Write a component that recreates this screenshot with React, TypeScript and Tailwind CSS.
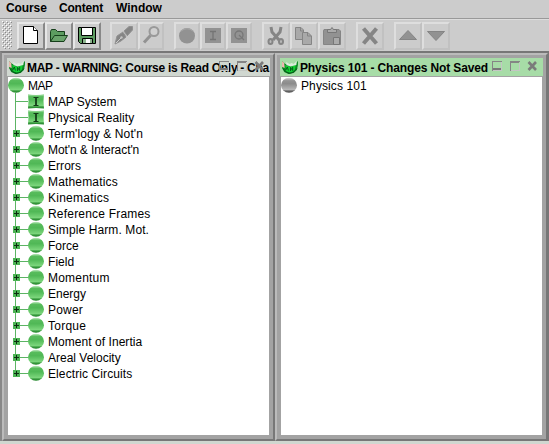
import type { ReactNode } from "react";

const sections = [
  { label: "Term'logy & Not'n", tracking: "tracking-[0.1px]" },
  { label: "Mot'n & Interact'n", tracking: "tracking-[-0.08px]" },
  { label: "Errors", tracking: "tracking-[0.05px]" },
  { label: "Mathematics", tracking: "tracking-[0.17px]" },
  { label: "Kinematics", tracking: "tracking-[0.25px]" },
  { label: "Reference Frames", tracking: "tracking-[0.2px]" },
  { label: "Simple Harm. Mot.", tracking: "tracking-[0.1px]" },
  { label: "Force", tracking: "tracking-normal" },
  { label: "Field", tracking: "tracking-[0.05px]" },
  { label: "Momentum", tracking: "tracking-[0.2px]" },
  { label: "Energy", tracking: "tracking-normal" },
  { label: "Power", tracking: "tracking-[0.2px]" },
  { label: "Torque", tracking: "tracking-[0.25px]" },
  { label: "Moment of Inertia", tracking: "tracking-[0.05px]" },
  { label: "Areal Velocity", tracking: "tracking-normal" },
  { label: "Electric Circuits", tracking: "tracking-[0.1px]" },
];

function Defs() {
  return (
    <svg className="absolute h-0 w-0">
      <defs>
        <linearGradient id="green" x1="0" y1="0" x2="0" y2="1">
          <stop offset="0" stopColor="#c4ecc4" />
          <stop offset=".18" stopColor="#58bc5c" />
          <stop offset=".4" stopColor="#50b856" />
          <stop offset=".8" stopColor="#7cd67c" />
          <stop offset=".88" stopColor="#3c9c42" />
          <stop offset="1" stopColor="#208428" />
        </linearGradient>
        <linearGradient id="gray" x1="0" y1="0" x2="0" y2="1">
          <stop offset="0" stopColor="#dcdcdc" />
          <stop offset=".2" stopColor="#949494" />
          <stop offset=".4" stopColor="#8c8c8c" />
          <stop offset=".8" stopColor="#b8b8b8" />
          <stop offset=".88" stopColor="#686868" />
          <stop offset="1" stopColor="#505050" />
        </linearGradient>
      </defs>
    </svg>
  );
}

function Ball({ fill = "url(#green)" }: { fill?: string }) {
  return (
    <svg className="h-4 w-4 shrink-0" viewBox="0 0 16 16">
      <ellipse cx="8" cy="8.2" rx="8" ry="7.5" fill={fill} />
    </svg>
  );
}

function Page() {
  return (
    <svg className="h-4 w-4 shrink-0" viewBox="0 0 16 16">
      <path d="M0 1Q8 3 16 1Q15 8 16 15.5Q8 14.5 0 15.5Q1 8 0 1Z" fill="url(#green)" />
      <path d="M5.5 4.5h5M5.5 12.5h5" fill="none" stroke="#143c18" />
      <path d="M8 4.5v8" stroke="#143c18" strokeWidth="1.8" />
    </svg>
  );
}

function Logo() {
  return (
    <svg className="h-[17px] w-[18px] shrink-0" viewBox="0 0 17 17" preserveAspectRatio="none">
      <path d="M1 2L4 5L12 6L16 2V6L15 11L12 14L7 15L3 13L1 9Z" fill="#0a8c22" />
      <path d="M1 2L3 4L3.5 9L1 8Z" fill="#f4b8b4" />
      <path d="M4 6L9 8L14 6L13 11L10 13.5L5 12.5Z" fill="#12d032" />
      <path d="M5 3L8 5L10 4L12 5L15 2L14.5 6L9 7.5L5 6Z" fill="#dcecdc" />
      <path d="M4.5 11L6 8L7 11.5M9 12V8.5L11 11.5V8M2 9.5L4 12.5L8 14.5L12 13L15 9.5" fill="none" stroke="#07551a" strokeWidth=".9" />
    </svg>
  );
}

function Branch({ icon, label, tracking, leaf, last }: { icon: ReactNode; label: string; tracking: string; leaf?: boolean; last?: boolean }) {
  return (
    <div className="flex h-4 items-center">
      <svg className="h-4 w-5 shrink-0" viewBox="0 0 20 16" shapeRendering="crispEdges">
        <path d={last ? "M7.5 0V8" : "M7.5 0V16"} stroke="#5cb464" />
        <path d="M8 8.5H20" stroke="#5cb464" />
        {!leaf && (
          <>
            <rect x="5" y="5" width="7" height="7" fill="#4cb454" />
            <rect x="6" y="8" width="5" height="1" fill="#0c2c10" />
            <rect x="8" y="6" width="1" height="5" fill="#0c2c10" />
          </>
        )}
      </svg>
      {icon}
      <span className={`${tracking} ml-1 whitespace-nowrap pt-0.5 text-[12px] leading-4`}>{label}</span>
    </div>
  );
}

function Tool({ width = "w-7", children }: { width?: string; children: ReactNode }) {
  return (
    <div className={`${width} h-7 shrink-0 border-2 border-[#dedede] border-r-[#c1c1c1] border-b-[#c1c1c1] bg-[#ccc]`}>
      <svg className="-ml-px -mt-px h-[25px] w-[26px]" viewBox="0 0 26 25">{children}</svg>
    </div>
  );
}

function ActiveTool({ children }: { children: ReactNode }) {
  return (
    <div className="h-7 w-7 shrink-0 border-2 border-[#e6e6e6] border-r-[#888] border-b-[#888] bg-[#ccc]">
      <svg className="-ml-px -mt-px h-[25px] w-[26px]" viewBox="0 0 26 25">{children}</svg>
    </div>
  );
}

function WindowButtons() {
  return (
    <svg className="absolute right-0 top-0 h-[18px] w-[54px]" viewBox="0 0 54 18" fill="none">
      <g shapeRendering="crispEdges">
        <path d="M3.5 13V3.5H13" stroke="#858585" />
        <path d="M12.5 4V12.5H4" stroke="#c3c7c3" />
        <path d="M4 11H12" stroke="#777" strokeWidth="2" />
        <path d="M21.5 13V3.5H31M22 4.5H30" stroke="#858585" />
        <path d="M30.5 5V12.5H22" stroke="#c3c7c3" />
      </g>
      <path d="M39.5 4L47 12M47 4L39.5 12" stroke="#7b7b7b" strokeWidth="2.6" />
    </svg>
  );
}

function Frame({ title, titleTracking, active, className, children }: { title: string; titleTracking: string; active?: boolean; className: string; children: ReactNode }) {
  return (
    <section className={`${className} flex h-[388px] shrink-0 flex-col border-2 border-[#bbb] border-r-[#777] border-b-[#777] bg-[#a3a3a3] px-1 pb-1 pt-[3px]`}>
      <header className={`${active ? "bg-[#a7dca7]" : "bg-[#d0d7d0]"} relative -mx-px flex h-[18px] shrink-0 items-center`}>
        <div className="ml-px mr-px"><Logo /></div>
        <span className={`${titleTracking} whitespace-nowrap pt-0.5 text-[12px] font-bold leading-[16px]`}>{title}</span>
        <WindowButtons />
      </header>
      <div className="mt-px flex-1 bg-white">{children}</div>
    </section>
  );
}

export default function App() {
  return (
    <main className="flex h-[444px] w-[549px] flex-col overflow-hidden bg-[#d0d7d0] font-['Liberation_Sans',Arial,sans-serif] text-black">
      <Defs />
      <nav className="flex h-[19px] shrink-0 border-b border-[#999] bg-[#ccc] pl-[6px] text-[12px] font-bold leading-[16px]">
        <span className="w-[53px] tracking-[-0.1px]">Course</span>
        <span className="w-[57px] tracking-[-0.2px]">Content</span>
        <span>Window</span>
      </nav>
      <div className="flex h-[32px] shrink-0 border-t border-[#ddd] bg-[#ccc] pl-0.5 pt-[2px]">
        <svg className="-mt-px mr-[5px] h-7 w-[10px] shrink-0" viewBox="0 0 10 28" shapeRendering="crispEdges">
          <defs>
            <pattern id="grip" width="4" height="4" patternUnits="userSpaceOnUse">
              <path d="M0 0h1v1H0zM2 2h1v1H2z" fill="#fff" />
              <path d="M1 1h1v1H1zM3 3h1v1H3z" fill="#888" />
            </pattern>
          </defs>
          <rect width="10" height="28" fill="url(#grip)" />
        </svg>
        <ActiveTool>
          <path d="M5.5 3.5H15.5L19.5 7.5V20.5H5.5Z" fill="#fff" stroke="#000" /><path d="M15.5 3.5V7.5H19.5" fill="#fff" stroke="#000" />
        </ActiveTool>
        <ActiveTool>
          <path d="M4.5 18.5V8.5L5.5 6.5H9.5L11.5 8.5H18.5V12.5H9.5Z" fill="#5c9c60" stroke="#163f1b" />
          <path d="M4.5 18.5L8.5 12.5H21.5L18 18.5Z" fill="#6aa46c" stroke="#163f1b" />
        </ActiveTool>
        <ActiveTool>
          <path d="M4.5 4.5H21.5V20.5H6.5L4.5 18.5Z" fill="#5c9c60" stroke="#000" />
          <path d="M7.5 4.5H18.5V12.5H7.5ZM8.5 15.5H18.5V20.5H8.5Z" fill="#fff" stroke="#000" />
          <path d="M9 16h3v4h-3zM16 16h2v4h-2z" fill="#8cb48e" />
        </ActiveTool>
        <div className="w-[9px] shrink-0" />
        <Tool>
          <path d="M4 21L6 13L12 9L15 14L10 18ZM13 8L18 3.5H21.5V7L16 13Z" fill="#858585" stroke="#929292" />
          <path d="M5 20L10 15" stroke="#ccc" /><circle cx="10.5" cy="14.5" r="1.2" fill="#c4c4c4" /><path d="M12 8.5L16 13" stroke="#bbb" />
        </Tool>
        <Tool width="w-[26px]">
          <circle cx="15" cy="8.5" r="4.5" fill="#d0d0d0" stroke="#999" strokeWidth="2" /><path d="M11.5 12.5L5 19.5" stroke="#929292" strokeWidth="3" />
        </Tool>
        <div className="w-[10px] shrink-0" />
        <Tool width="w-[26px]"><ellipse cx="12" cy="12.7" rx="8" ry="7.7" fill="#929292" /><path d="M6 8Q12 3.5 18 8" stroke="#a8a8a8" fill="none" /></Tool>
        <Tool width="w-[26px]"><path d="M4 5h16v15H4z" fill="#929292" /><path d="M9 8.5h6M12 8v9M9 16.5h6" stroke="#747474" strokeWidth="1.3" /></Tool>
        <Tool width="w-[26px]"><path d="M4 5h16v15H4z" fill="#929292" /><circle cx="12" cy="12" r="4" fill="none" stroke="#777" strokeWidth="1.3" /><path d="M12 12L17 17" stroke="#777" strokeWidth="1.3" /></Tool>
        <div className="w-[10px] shrink-0" />
        <Tool>
          <path d="M8 4L9 9L16 17M18 4L17 9L10 17" fill="none" stroke="#858585" strokeWidth="3" />
          <ellipse cx="7.5" cy="18.5" rx="2" ry="2.5" fill="#bbb" stroke="#858585" strokeWidth="2" /><ellipse cx="18" cy="18.5" rx="2" ry="2.5" fill="#bbb" stroke="#858585" strokeWidth="2" />
        </Tool>
        <Tool><path d="M4.5 4.5H10L12.5 7V16.5H4.5Z" fill="#a9a9a9" stroke="#858585" /><path d="M11.5 9.5H17L20.5 13V21.5H11.5Z" fill="#a9a9a9" stroke="#858585" /><path d="M9.5 5V8H12M16.5 10V13H20" fill="none" stroke="#858585" /></Tool>
        <Tool><path d="M5 6.5H20L21.5 8V21.5H4.5V8Z" fill="#929292" stroke="#858585" /><path d="M8.5 9.5V6.5H11.5L13 4.5L14.5 6.5H17.5V9.5Z" fill="#aaa" stroke="#777" /><path d="M14.5 14.5h6v7h-6z" fill="#aaa" stroke="#777" /></Tool>
        <div className="w-[10px] shrink-0" />
        <Tool><path d="M6.5 5.5L19.5 20.5M19.5 5.5L6.5 20.5" stroke="#858585" strokeWidth="4" /></Tool>
        <div className="w-[10px] shrink-0" />
        <Tool><path d="M4.5 16.5L13 7.5L21.5 16.5Z" fill="#929292" stroke="#858585" /></Tool>
        <Tool><path d="M4.5 8.5H21.5L13 17.5Z" fill="#929292" stroke="#858585" /></Tool>
      </div>
      <div className="flex h-[390px] w-[549px] shrink-0 border-b-0 border-l-2 border-r border-t-2 border-[#777] border-l-[#888] bg-[#d0d7d0]">
        <Frame title="MAP - WARNING: Course is Read Only - Cha" titleTracking="tracking-[-0.28px]" className="w-[273px]">
          <div className="flex h-4 items-center"><Ball /><span className="ml-1 pt-0.5 text-[12px] leading-4 tracking-[-0.5px]">MAP</span></div>
          <Branch leaf icon={<Page />} label="MAP System" tracking="tracking-[-0.08px]" />
          <Branch leaf icon={<Page />} label="Physical Reality" tracking="tracking-[0.1px]" />
          {sections.map(({ label, tracking }, i) => (
            <Branch key={label} icon={<Ball />} label={label} tracking={tracking} last={i === sections.length - 1} />
          ))}
        </Frame>
        <Frame title="Physics 101 - Changes Not Saved" titleTracking="tracking-[-0.13px]" active className="w-[273px]">
          <div className="flex h-4 items-center"><Ball fill="url(#gray)" /><span className="ml-1 pt-0.5 text-[12px] leading-4 tracking-[0.1px]">Physics 101</span></div>
        </Frame>
      </div>
      <div className="h-[3px] shrink-0 bg-[#d0d7d0]" />
    </main>
  );
}
